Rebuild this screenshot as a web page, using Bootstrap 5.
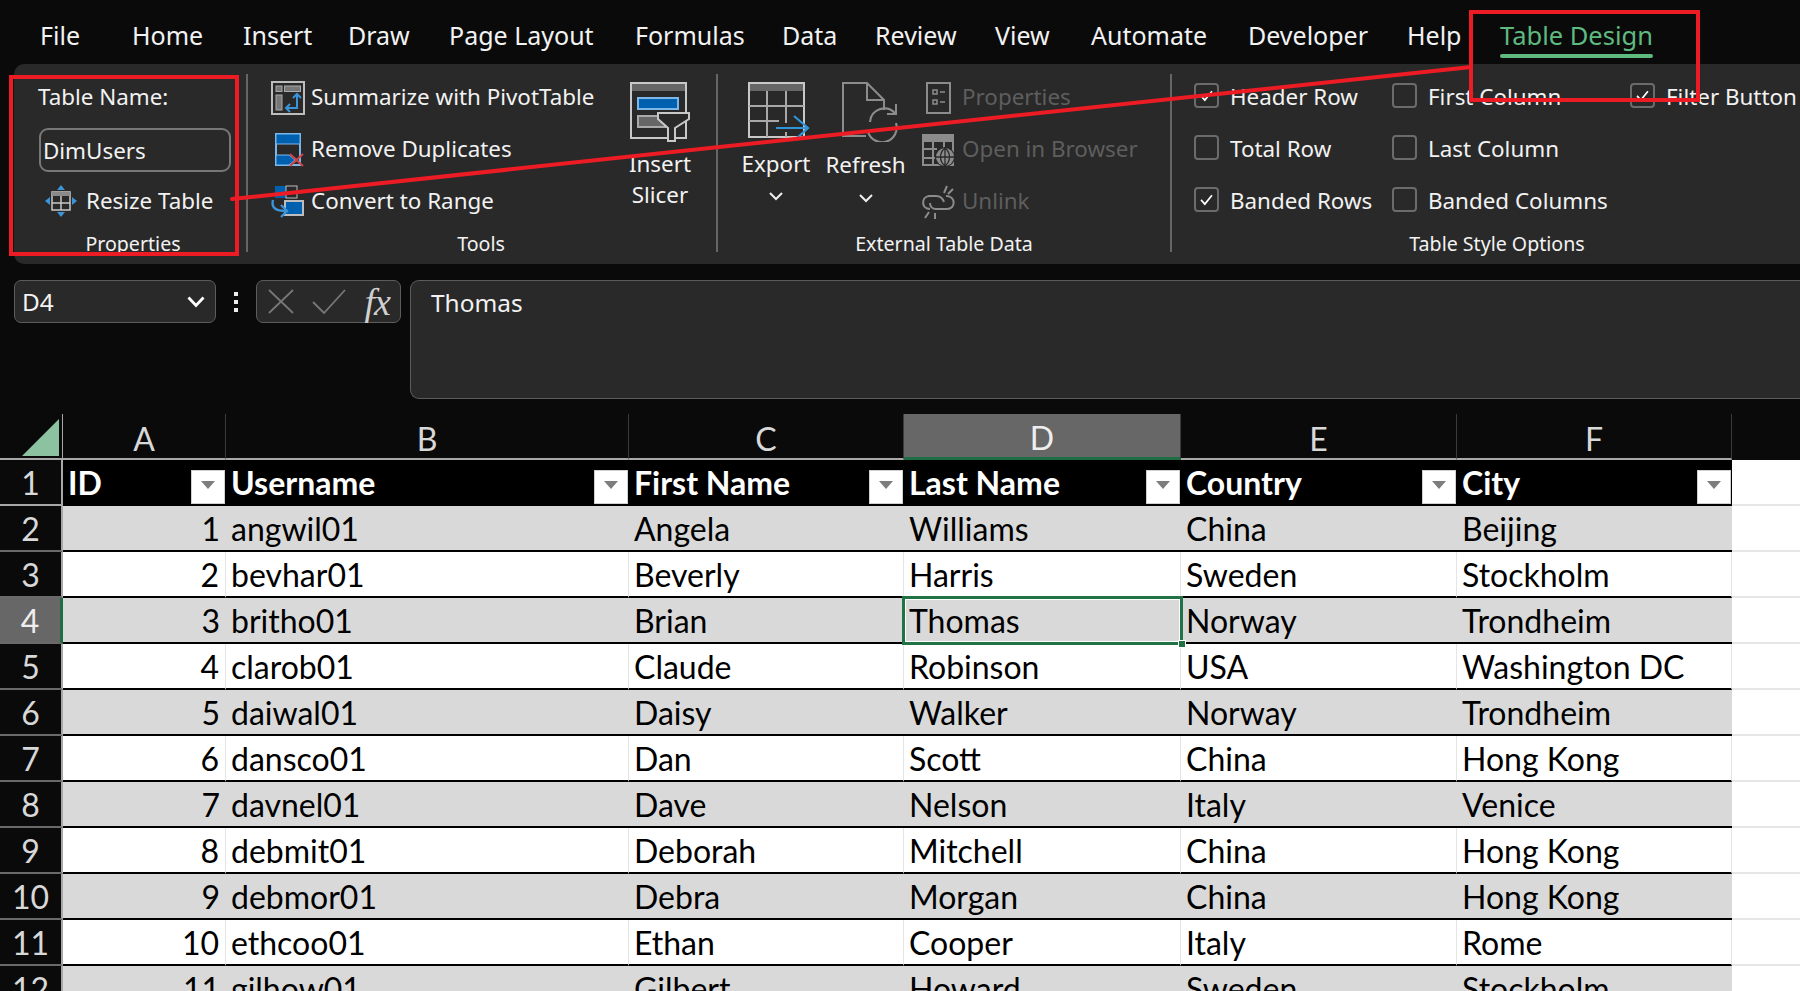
<!DOCTYPE html>
<html lang="en">
<head>
<meta charset="utf-8">
<title>Table Design</title>
<link rel="stylesheet" href="https://cdn.jsdelivr.net/npm/bootstrap@5.3.0/dist/css/bootstrap.min.css">
<style>
html,body{height:100%;margin:0}
body{width:1800px;height:991px;overflow:hidden;background:#0a0a0a;color:#f2f2f2;font-family:"Noto Sans","Open Sans",sans-serif;font-size:22.4px;position:relative}
.tabbar{height:64px;padding-left:40px;white-space:nowrap}
.tabitem{position:relative;line-height:36px;margin-top:17px;height:37px;color:#f2f2f2;flex:none;font-size:25px}
.tabitem.sel{color:#5fba80;font-size:25.5px}
.tabitem.sel::after{content:"";position:absolute;left:0;right:0;top:37px;height:4px;border-radius:2px;background:#5fba80}
.t1{width:92px}.t2{width:111px}.t3{width:105px}.t4{width:101px}.t5{width:186px}.t6{width:147px}.t7{width:93px}.t8{width:120px}.t9{width:96px}.t10{width:157px}.t11{width:159px}.t12{width:93px}
.ribbon{height:200px;margin-left:14px;background:#292929;border-radius:10px 0 0 10px;overflow:hidden}
.rgroup{margin-top:7px;height:184px;flex:none;position:relative}
.rsep{width:2px;height:178px;margin-top:10px;background:#666;flex:none}
.g1{width:232px;padding-left:24px}.g2{width:468px;padding-left:23px}.g3{width:452px;padding-left:19px}.g4{width:628px;padding-left:22px}
.rline{height:52px;white-space:nowrap}
.rlabel{position:absolute;left:0;top:157px;height:32px;line-height:32px;font-size:19.6px;text-align:center}
.g1 .rlabel{width:238px}.g2 .rlabel{width:466px}.g3 .rlabel{width:452px}.g4 .rlabel{width:650px}
.nameinput{width:192px;height:44px;margin:2px 0 0 1px;padding:0 2px;background:transparent;border:2px solid #777;border-radius:9px;color:#f2f2f2;font:inherit;line-height:38px}
.resizeico{margin-left:6px;margin-right:8px;flex:none}
.icoslot{width:40px;flex:none}
.biglist{width:344px;flex:none}
.bigbtn{flex:none;text-align:center;line-height:31px}
.bigbtn svg{display:block;margin:11px auto 10px}
.slicer{width:90px}.slicer svg{margin-bottom:5px}
.export{width:78px}.refresh{width:81px;margin-left:10px}
.export svg.expico{margin-left:11px}
.refresh svg.refico{margin-left:17px;margin-bottom:7px}
.bigbtn svg.chev{margin:13px auto 0}
.refresh svg.chev{margin-top:14px}
.dis{color:#5e5e5e}
.dlist{margin-left:14px}
.dlist .icoslot{width:42px}
.optcol1{width:198px;flex:none}.optcol2{width:238px;flex:none}.optcol3{flex:none}
.optcheck.form-check-input{width:25px;height:25px;margin:-3px 11px 0 0;flex:none;background-color:transparent;border:2px solid #6b6b6b;border-radius:4px;box-shadow:none}
.optcheck.form-check-input:checked{background-color:transparent;border-color:#6b6b6b;background-size:100%;background-image:url("data:image/svg+xml,%3Csvg xmlns='http://www.w3.org/2000/svg' viewBox='0 0 25 25'%3E%3Cpath d='M6 13l4.500 5L19 7.500' fill='none' stroke='%23fff' stroke-width='2'/%3E%3C/svg%3E")}
.fbar{height:119px;margin-top:16px;margin-bottom:15px;font-size:24.4px}
.boxdark{background:#292929;border:1.5px solid #5c5c5c}
.namebox{width:202px;height:43px;margin-left:14px;border-radius:7px;padding:0 10px 0 7px;flex:none;line-height:40px}
.dots{width:40px;flex:none;height:43px}
.dots i{display:block;width:4px;height:4px;background:#eee;margin:0 0 4px}
.fxbox{width:145px;height:43px;border-radius:7px;flex:none;margin-right:9px;padding:0 10px 0 11px}
.fxlabel{font-family:"Liberation Serif",serif;font-style:italic;font-size:38px;line-height:40px;color:#d0d0d0;letter-spacing:-1px}
.fxinput{flex:1 1 auto;height:119px;border-radius:9px 0 0 9px;border-right:0;padding:3px 0 0 20px;line-height:38px}
.sheet.table{table-layout:fixed;width:1800px;margin:0;border-collapse:separate;border-spacing:0;font-family:Lato,"Liberation Sans",sans-serif;font-size:32px;color:#000}
.c0{width:63px}.c1{width:163px}.c2{width:403px}.c3{width:275px}.c4{width:277px}.c5{width:276px}.c6{width:275px}
.sheet.table>:not(caption)>*>*{padding:0;height:46px;line-height:42px;border:0;box-shadow:none;background:transparent;color:inherit;font-weight:400}
.sheet.table>thead>tr>th{height:45px;padding-top:5px;background:#0a0a0a;color:#d8d8d8;text-align:center;border-bottom:2px solid #a8a8a8;border-right:1px solid #3a3a3a;line-height:38px;overflow:visible}
.sheet.table>thead>tr>th.blank{border:0;background:#0a0a0a;border-bottom:2px solid #0a0a0a}
.sheet.table>thead>tr>th.cselected{background:#676767;border-bottom:3px solid #1f6d45;color:#eee}
.sheet.table>thead>tr>th.corner{padding:0;border-right:1px solid #a8a8a8;vertical-align:bottom;line-height:0}
.cornertri{display:block;width:0;height:0;margin:0 0 2px 22px;border-style:solid;border-width:0 0 37px 37px;border-color:transparent transparent #8cc2a0 transparent}
.sheet.table>tbody>tr>td{white-space:nowrap;padding:2px 0 0 5px;border-bottom:2px solid #000;background:#fff}
.sheet.table>tbody>tr.stripe>td{background:#d9d9d9}
.sheet.table>tbody>tr:not(.stripe)>td{border-right:1px solid #e5e5e5}
.sheet.table>tbody>tr>td.rowhead,.sheet.table>tbody>tr.stripe>td.rowhead,.sheet.table>tbody>tr:not(.stripe)>td.rowhead{padding:2px 0 0;background:#0a0a0a;color:#d8d8d8;text-align:center;border-bottom:2px solid #6a6a6a;border-right:2px solid #a8a8a8}
.sheet.table>tbody>tr>td.rowactive,.sheet.table>tbody>tr.stripe>td.rowactive{background:#676767;border-right:3px solid #1f6d45;color:#eee}
.sheet.table>tbody>tr>td.num{text-align:right;padding:2px 6px 0 0}
.sheet.table>tbody>tr>td.outside,.sheet.table>tbody>tr.stripe>td.outside,.sheet.table>tbody>tr:not(.stripe)>td.outside{background:#fff;border:0;border-bottom:2px solid #e6e6e6}
.sheet.table>tbody>tr.headrow>td{background:#000;color:#fff;font-weight:700;border-right:0;padding:0 1px 0 5px}
.sheet.table>tbody>tr.headrow>td.rowhead{background:#0a0a0a;color:#d8d8d8;font-weight:400;border-bottom-color:#a8a8a8;padding:2px 0 0}
.sheet.table>tbody>tr.headrow>td.outside{background:#fff;padding:0;border-bottom-color:#e6e6e6}
.headflex{height:44px;line-height:45px}
.filterbtn{width:34px;height:34px;margin-top:10px;background:#fff;border:1px solid #d0d0d0;flex:none}
.filterbtn::after{content:"";width:0;height:0;margin-top:10px;border-style:solid;border-width:8px 7px 0 7px;border-color:#7d7d7d transparent transparent transparent}
.sheet.table>tbody>tr>td.activecell{position:relative}
.cellring{position:absolute;left:-2px;right:-2px;top:-2px;bottom:-3px;border:3px solid #217346;box-shadow:inset 0 0 0 1px #fff;z-index:3}
.cellhandle{position:absolute;right:-6px;bottom:-6px;width:8px;height:8px;background:#217346;border:1px solid #fff}
.annot{position:absolute;left:0;top:0;z-index:10;pointer-events:none}
</style>
</head>
<body>
<nav class="tabbar d-flex">
  <div class="tabitem t1">File</div>
  <div class="tabitem t2">Home</div>
  <div class="tabitem t3">Insert</div>
  <div class="tabitem t4">Draw</div>
  <div class="tabitem t5">Page Layout</div>
  <div class="tabitem t6">Formulas</div>
  <div class="tabitem t7">Data</div>
  <div class="tabitem t8">Review</div>
  <div class="tabitem t9">View</div>
  <div class="tabitem t10">Automate</div>
  <div class="tabitem t11">Developer</div>
  <div class="tabitem t12">Help</div>
  <div class="tabitem sel">Table Design</div>
</nav>

<section class="ribbon d-flex">
  <div class="rgroup g1">
    <div class="rline d-flex align-items-center">Table Name:</div>
    <div class="rline d-flex align-items-center"><input class="nameinput" value="DimUsers" aria-label="Table Name"></div>
    <div class="rline d-flex align-items-center">
      <svg width="34" height="34" viewBox="0 0 34 34" class="resizeico">
        <path d="M17 1l4 5h-8zM17 33l-4-5h8zM1 17l5-4v8zM33 17l-5 4v-8z" fill="#3b93d8"/>
        <rect x="8" y="8" width="18" height="18" fill="none" stroke="#c8c8c8" stroke-width="1.5"/>
        <rect x="8" y="8" width="18" height="4" fill="#8a8a8a"/>
        <path d="M17 12v14M8 19h18" stroke="#c8c8c8" stroke-width="1.5"/>
      </svg>
      <span>Resize Table</span>
    </div>
    <div class="rlabel">Properties</div>
  </div>
  <div class="rsep"></div>
  <div class="rgroup g2 d-flex">
    <div class="biglist">
      <div class="rline d-flex align-items-center">
        <div class="icoslot"><svg width="34" height="34" viewBox="0 0 34 34"><rect x="1" y="1" width="32" height="32" fill="none" stroke="#bdbdbd" stroke-width="2"/><rect x="5" y="5" width="6" height="5.5" fill="#777" stroke="#aaa"/><rect x="13.5" y="5" width="16" height="5.5" fill="#777" stroke="#aaa"/><rect x="5" y="14" width="6" height="15" fill="#777" stroke="#aaa"/><path d="M15 27h11V14" fill="none" stroke="#3b93d8" stroke-width="2"/><path d="M22 17l4-4 4 4M19 23l-4 4 4 4" fill="none" stroke="#3b93d8" stroke-width="2"/></svg></div>
        <span>Summarize with PivotTable</span>
      </div>
      <div class="rline d-flex align-items-center">
        <div class="icoslot"><svg width="34" height="34" viewBox="0 0 34 34"><rect x="5" y="1" width="24" height="31" fill="none" stroke="#7db7ea" stroke-width="2"/><rect x="5" y="1" width="24" height="10" fill="#0060b0" stroke="#7db7ea" stroke-width="1"/><path d="M5 22h13l6 5-6 5H5z" fill="#0060b0" stroke="#7db7ea" stroke-width="1"/><path d="M19 21l13 12M32 21L19 33" stroke="#cf4347" stroke-width="2"/></svg></div>
        <span>Remove Duplicates</span>
      </div>
      <div class="rline d-flex align-items-center">
        <div class="icoslot"><svg width="34" height="34" viewBox="0 0 34 34"><rect x="4" y="1" width="11" height="12" fill="#0060b0"/><rect x="15" y="1" width="11" height="12" fill="#292929" stroke="#bdbdbd"/><rect x="14" y="16" width="18" height="14" fill="#0060b0" stroke="#bdbdbd" stroke-width="2"/><path d="M2 15c-2 8 3 11 13 11" fill="none" stroke="#3b93d8" stroke-width="2.4"/><path d="M10 20l6 6-6 6" fill="none" stroke="#3b93d8" stroke-width="2.4"/></svg></div>
        <span>Convert to Range</span>
      </div>
    </div>
    <div class="bigbtn slicer">
      <svg width="62" height="61" viewBox="0 0 62 61"><rect x="2" y="1" width="55" height="55" fill="none" stroke="#c8c8c8" stroke-width="2"/><rect x="3" y="2" width="53" height="7" fill="#666"/><rect x="9" y="16" width="40" height="11" fill="#0060b0" stroke="#7db7ea" stroke-width="2"/><rect x="9" y="34" width="27" height="11" fill="#666" stroke="#aaa" stroke-width="2"/><path d="M29 31h31v6L46 46v13h-7V46L29 37z" fill="#292929" stroke="#c8c8c8" stroke-width="2"/></svg>
      <div>Insert</div><div>Slicer</div>
    </div>
    <div class="rlabel">Tools</div>
  </div>
  <div class="rsep"></div>
  <div class="rgroup g3 d-flex">
    <div class="bigbtn export">
      <svg class="expico" width="62" height="56" viewBox="0 0 62 56"><rect x="1" y="1" width="55" height="54" fill="none" stroke="#c8c8c8" stroke-width="2"/><rect x="2" y="2" width="53" height="7" fill="#666"/><path d="M1 24h55M1 39h30M19 9v46M38 9v32M38 50v5" stroke="#a8a8a8" stroke-width="2" fill="none"/><path d="M28 46h32M46 34l14 12-12 11" fill="none" stroke="#2f94d8" stroke-width="2.2"/></svg>
      <div>Export</div>
      <svg class="chev" width="14" height="9" viewBox="0 0 14 9"><path d="M1 1l6 6 6-6" fill="none" stroke="#eee" stroke-width="2"/></svg>
    </div>
    <div class="bigbtn refresh">
      <svg class="refico" width="62" height="60" viewBox="0 0 62 60"><path d="M24 54H1V1h24l17 17v10M25 1v17h17" fill="none" stroke="#8c8c8c" stroke-width="2"/><path d="M53 31a14.500 14.500 0 0 0-25 9M26 50a14.500 14.500 0 0 0 28-9" fill="none" stroke="#8c8c8c" stroke-width="2.200"/><path d="M54 22v10H45" fill="none" stroke="#8c8c8c" stroke-width="2"/></svg>
      <div>Refresh</div>
      <svg class="chev" width="14" height="9" viewBox="0 0 14 9"><path d="M1 1l6 6 6-6" fill="none" stroke="#eee" stroke-width="2"/></svg>
    </div>
    <div class="dlist dis">
      <div class="rline d-flex align-items-center">
        <div class="icoslot"><svg width="36" height="34" viewBox="0 0 36 34"><rect x="7" y="2" width="23" height="30" fill="none" stroke="#8c8c8c" stroke-width="2"/><path d="M13 9h4v4h-4zM13 19h4v4h-4z" fill="none" stroke="#8c8c8c" stroke-width="1.500"/><path d="M20 11h5M20 21h5" stroke="#8c8c8c" stroke-width="1.500"/></svg></div>
        <span>Properties</span>
      </div>
      <div class="rline d-flex align-items-center">
        <div class="icoslot"><svg width="36" height="34" viewBox="0 0 36 34"><rect x="3" y="2" width="30" height="30" fill="none" stroke="#8c8c8c" stroke-width="2"/><rect x="3" y="2" width="30" height="7" fill="#8c8c8c"/><path d="M3 16h14M3 25h12M13 9v23M24 9v8" stroke="#8c8c8c" stroke-width="2"/><circle cx="25" cy="24" r="10" fill="#292929"/><circle cx="25" cy="24" r="9" fill="#8c8c8c"/><path d="M16 24h18M25 15v18M25 15c-6 5-6 13 0 18M25 15c6 5 6 13 0 18" fill="none" stroke="#292929" stroke-width="1.300"/></svg></div>
        <span>Open in Browser</span>
      </div>
      <div class="rline d-flex align-items-center">
        <div class="icoslot"><svg width="36" height="34" viewBox="0 0 36 34"><path d="M10 24c-9 0-9-12-1-13h7c5 0 7 3 8 6M26 11c10 0 10 13 1 13H16c-4 0-6-3-6-6" fill="none" stroke="#8c8c8c" stroke-width="2"/><path d="M27 1l-3 7M33 4l-5 5M9 27l-4 6M15 28v6" stroke="#8c8c8c" stroke-width="2"/></svg></div>
        <span>Unlink</span>
      </div>
    </div>
    <div class="rlabel">External Table Data</div>
  </div>
  <div class="rsep"></div>
  <div class="rgroup g4 d-flex">
    <div class="optcol1">
      <label class="rline d-flex align-items-center"><input class="optcheck form-check-input" type="checkbox" checked>Header Row</label>
      <label class="rline d-flex align-items-center"><input class="optcheck form-check-input" type="checkbox">Total Row</label>
      <label class="rline d-flex align-items-center"><input class="optcheck form-check-input" type="checkbox" checked>Banded Rows</label>
    </div>
    <div class="optcol2">
      <label class="rline d-flex align-items-center"><input class="optcheck form-check-input" type="checkbox">First Column</label>
      <label class="rline d-flex align-items-center"><input class="optcheck form-check-input" type="checkbox">Last Column</label>
      <label class="rline d-flex align-items-center"><input class="optcheck form-check-input" type="checkbox">Banded Columns</label>
    </div>
    <div class="optcol3">
      <label class="rline d-flex align-items-center"><input class="optcheck form-check-input" type="checkbox" checked>Filter Button</label>
    </div>
    <div class="rlabel">Table Style Options</div>
  </div>
</section>

<section class="fbar d-flex">
  <div class="namebox boxdark d-flex justify-content-between align-items-center">
    <span>D4</span>
    <svg width="18" height="12" viewBox="0 0 18 12"><path d="M1.500 1.500L9 9.500l7.500-8" fill="none" stroke="#fff" stroke-width="2.800"/></svg>
  </div>
  <div class="dots d-flex flex-column align-items-center justify-content-center"><i></i><i></i><i class="mb-0"></i></div>
  <div class="fxbox boxdark d-flex justify-content-between align-items-center">
    <svg width="26" height="25" viewBox="0 0 26 25"><path d="M1 1l24 23M25 1L1 24" stroke="#777" stroke-width="1.800"/></svg>
    <svg width="34" height="25" viewBox="0 0 34 25"><path d="M1 13l11 11L33 1" fill="none" stroke="#777" stroke-width="1.800"/></svg>
    <span class="fxlabel">fx</span>
  </div>
  <div class="fxinput boxdark">Thomas</div>
</section>

<table class="sheet table">
  <colgroup><col class="c0"><col class="c1"><col class="c2"><col class="c3"><col class="c4"><col class="c5"><col class="c6"><col></colgroup>
  <thead>
    <tr><th class="corner"><span class="cornertri"></span></th><th>A</th><th>B</th><th>C</th><th class="cselected">D</th><th>E</th><th>F</th><th class="blank"></th></tr>
  </thead>
  <tbody>
    <tr class="headrow"><td class="rowhead">1</td>
      <td><div class="headflex d-flex justify-content-between"><span>ID</span><span class="filterbtn d-flex justify-content-center"></span></div></td>
      <td><div class="headflex d-flex justify-content-between"><span>Username</span><span class="filterbtn d-flex justify-content-center"></span></div></td>
      <td><div class="headflex d-flex justify-content-between"><span>First Name</span><span class="filterbtn d-flex justify-content-center"></span></div></td>
      <td><div class="headflex d-flex justify-content-between"><span>Last Name</span><span class="filterbtn d-flex justify-content-center"></span></div></td>
      <td><div class="headflex d-flex justify-content-between"><span>Country</span><span class="filterbtn d-flex justify-content-center"></span></div></td>
      <td><div class="headflex d-flex justify-content-between"><span>City</span><span class="filterbtn d-flex justify-content-center"></span></div></td>
      <td class="outside"></td></tr>
    <tr class="stripe"><td class="rowhead">2</td><td class="num">1</td><td>angwil01</td><td>Angela</td><td>Williams</td><td>China</td><td>Beijing</td><td class="outside"></td></tr>
    <tr><td class="rowhead">3</td><td class="num">2</td><td>bevhar01</td><td>Beverly</td><td>Harris</td><td>Sweden</td><td>Stockholm</td><td class="outside"></td></tr>
    <tr class="stripe"><td class="rowhead rowactive">4</td><td class="num">3</td><td>britho01</td><td>Brian</td><td class="activecell">Thomas<span class="cellring"><span class="cellhandle"></span></span></td><td>Norway</td><td>Trondheim</td><td class="outside"></td></tr>
    <tr><td class="rowhead">5</td><td class="num">4</td><td>clarob01</td><td>Claude</td><td>Robinson</td><td>USA</td><td>Washington DC</td><td class="outside"></td></tr>
    <tr class="stripe"><td class="rowhead">6</td><td class="num">5</td><td>daiwal01</td><td>Daisy</td><td>Walker</td><td>Norway</td><td>Trondheim</td><td class="outside"></td></tr>
    <tr><td class="rowhead">7</td><td class="num">6</td><td>dansco01</td><td>Dan</td><td>Scott</td><td>China</td><td>Hong Kong</td><td class="outside"></td></tr>
    <tr class="stripe"><td class="rowhead">8</td><td class="num">7</td><td>davnel01</td><td>Dave</td><td>Nelson</td><td>Italy</td><td>Venice</td><td class="outside"></td></tr>
    <tr><td class="rowhead">9</td><td class="num">8</td><td>debmit01</td><td>Deborah</td><td>Mitchell</td><td>China</td><td>Hong Kong</td><td class="outside"></td></tr>
    <tr class="stripe"><td class="rowhead">10</td><td class="num">9</td><td>debmor01</td><td>Debra</td><td>Morgan</td><td>China</td><td>Hong Kong</td><td class="outside"></td></tr>
    <tr><td class="rowhead">11</td><td class="num">10</td><td>ethcoo01</td><td>Ethan</td><td>Cooper</td><td>Italy</td><td>Rome</td><td class="outside"></td></tr>
    <tr class="stripe"><td class="rowhead">12</td><td class="num">11</td><td>gilhow01</td><td>Gilbert</td><td>Howard</td><td>Sweden</td><td>Stockholm</td><td class="outside"></td></tr>
  </tbody>
</table>

<svg class="annot" width="1800" height="991" viewBox="0 0 1800 991" aria-hidden="true">
  <g fill="none" stroke="#ed1c24" stroke-width="4">
    <rect x="11" y="77" width="226" height="177"/>
    <rect x="1471" y="12" width="227" height="88"/>
    <path d="M232 199L1471 67" stroke-linecap="round"/>
  </g>
</svg>
<script src="https://cdn.jsdelivr.net/npm/bootstrap@5.3.0/dist/js/bootstrap.bundle.min.js"></script>
</body>
</html>
